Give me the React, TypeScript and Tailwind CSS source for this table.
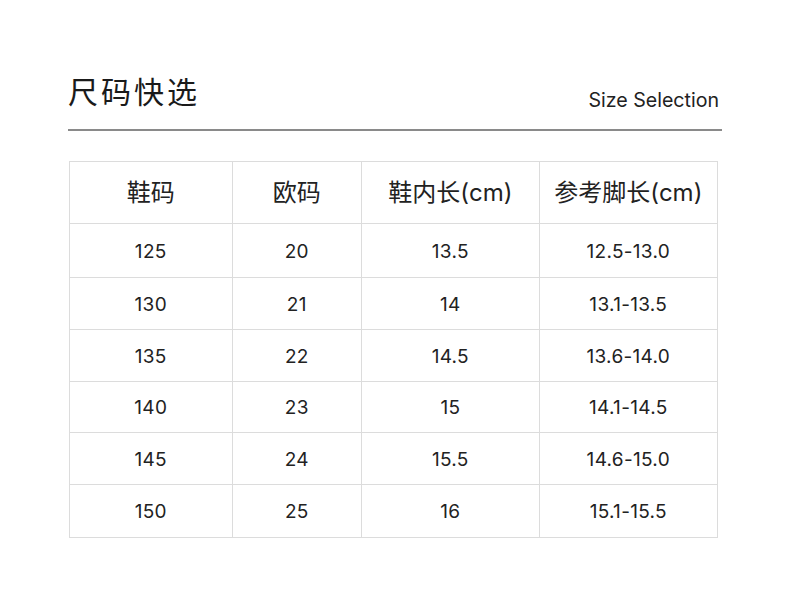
import React from "react";

const rows = [
  ["125", "20", "13.5", "12.5-13.0"],
  ["130", "21", "14", "13.1-13.5"],
  ["135", "22", "14.5", "13.6-14.0"],
  ["140", "23", "15", "14.1-14.5"],
  ["145", "24", "15.5", "14.6-15.0"],
  ["150", "25", "16", "15.1-15.5"],
];

const rowH = ["h-[54px]", "h-[52px]", "h-[52px]", "h-[51px]", "h-[52px]", "h-[52px]"];
const headers = ["鞋码", "欧码", "鞋内长(cm)", "参考脚长(cm)"];
const widths = ["w-[163px]", "w-[130px]", "w-[178px]", "w-[178px]"];

export default function App() {
  return (
    <div
      className="w-[790px] h-[596px] bg-white text-[#222]"
      style={{ fontFamily: "Inter, 'Noto Sans CJK SC', sans-serif" }}
    >
      <div className="pl-[68px] pt-[72px] w-[722px]">
        <div className="flex items-end justify-between">
          <div
            className="text-[30px] leading-[36px] tracking-[3px] text-[#1a1a1a]"
            style={{ fontFamily: "'Noto Sans CJK SC', sans-serif" }}
          >
            尺码快选
          </div>
          <div className="text-[19.6px] leading-[24px] pr-[3px] mb-[-4px] text-[#222]">Size Selection</div>
        </div>
        <div className="mt-[21px] h-[2px] bg-[#8a8a8a]" />
        <div className="mt-[30px] ml-[1px] w-[649px] border border-[#dcdcdc]">
          <div className="flex h-[62px] border-b border-[#dcdcdc]">
            {headers.map((h, i) => (
              <div
                key={h}
                className={`${widths[i]} flex items-center justify-center text-[24px] ${i < 3 ? "border-r border-[#dcdcdc]" : ""}`}
              >
                {h}
              </div>
            ))}
          </div>
          {rows.map((r, ri) => (
            <div
              key={ri}
              className={`flex ${rowH[ri]} ${ri < rows.length - 1 ? "border-b border-[#dcdcdc]" : ""}`}
            >
              {r.map((c, i) => (
                <div
                  key={i}
                  className={`${widths[i]} flex items-center justify-center pt-[3px] text-[19px] tracking-[0.3px] ${i < 3 ? "border-r border-[#dcdcdc]" : ""}`}
                >
                  {c}
                </div>
              ))}
            </div>
          ))}
        </div>
      </div>
    </div>
  );
}
